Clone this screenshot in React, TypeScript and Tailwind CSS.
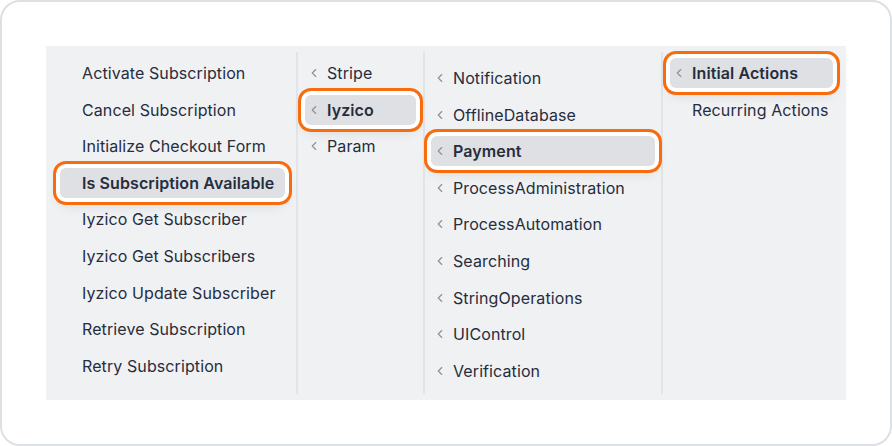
import { ChevronLeft } from 'lucide-react'

type Item = { label: string; selected?: boolean; plain?: boolean }

const col1: Item[] = [
  { label: 'Activate Subscription' },
  { label: 'Cancel Subscription' },
  { label: 'Initialize Checkout Form' },
  { label: 'Is Subscription Available', selected: true },
  { label: 'Iyzico Get Subscriber' },
  { label: 'Iyzico Get Subscribers' },
  { label: 'Iyzico Update Subscriber' },
  { label: 'Retrieve Subscription' },
  { label: 'Retry Subscription' },
]

const col2: Item[] = [{ label: 'Stripe' }, { label: 'Iyzico', selected: true }, { label: 'Param' }]

const col3: Item[] = [
  { label: 'Notification' },
  { label: 'OfflineDatabase' },
  { label: 'Payment', selected: true },
  { label: 'ProcessAdministration' },
  { label: 'ProcessAutomation' },
  { label: 'Searching' },
  { label: 'StringOperations' },
  { label: 'UIControl' },
  { label: 'Verification' },
]

// "Recurring Actions" is a leaf, so no chevron
const col4: Item[] = [{ label: 'Initial Actions', selected: true }, { label: 'Recurring Actions', plain: true }]

const Row = ({ item, chevron }: { item: Item; chevron: boolean }) => (
  <div
    className={`h-[30px] flex items-center rounded-[6px] pl-[2px] text-[16px] tracking-[0.1px] text-[#262d3d] whitespace-nowrap ${
      item.selected
        ? 'bg-[#dfe0e4] font-semibold shadow-[0_0_0_4px_#ffffff,0_0_0_7px_#f96c0e,0_6px_14px_rgba(0,0,0,0.12)]'
        : ''
    }`}
  >
    <span className="w-[20px] flex items-center">
      {chevron && !item.plain && <ChevronLeft size={14} strokeWidth={2} className="text-[#8d929b]" />}
    </span>
    <span>{item.label}</span>
  </div>
)

const Column = ({
  items,
  chevron,
  className,
}: {
  items: Item[]
  chevron: boolean
  className: string
}) => (
  <div className={`flex flex-col gap-[6.6px] ${className}`}>
    {items.map((it) => (
      <Row key={it.label} item={it} chevron={chevron} />
    ))}
  </div>
)

export default function App() {
  return (
    <div
      className="w-[892px] h-[446px] bg-white"
      style={{ fontFamily: 'Inter, "Noto Sans", sans-serif' }}
    >
      <div className="w-full h-full border-2 border-[#dde0e4] rounded-[20px] p-[44px]">
        <div className="h-[354px] bg-[#f0f1f3] flex py-[6px]">
          <Column items={col1} chevron={false} className="w-[252px] border-r-2 border-[#e3e4e7] pt-[6px] pl-[14px] pr-[11px]" />
          <Column items={col2} chevron className="w-[127px] border-r-2 border-[#e3e4e7] pt-[6px] pl-[7px] pr-[7px]" />
          <Column items={col3} chevron className="w-[238px] border-r-2 border-[#e3e4e7] pt-[11px] pl-[6px] pr-[6px]" />
          <Column items={col4} chevron className="flex-1 pt-[6px] pl-[7px] pr-[13px]" />
        </div>
      </div>
    </div>
  )
}
